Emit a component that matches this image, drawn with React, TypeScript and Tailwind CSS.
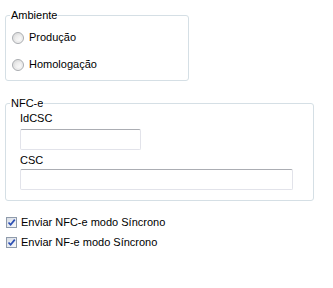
import type { ReactNode } from 'react'

const font = "font-['Liberation_Sans',Arial,sans-serif]"

function Radio({ label }: { label: string }) {
  return (
    <div className="flex h-[27px] items-center gap-[5px] pl-[6px]">
      <span className="flex h-[12px] w-[12px] items-center justify-center rounded-full border border-[#a9acb0] bg-gradient-to-br from-[#dcdcdc] to-[#f6f6f6]">
        <span className="h-[6px] w-[6px] rounded-full bg-gradient-to-br from-[#e6e6e6] to-[#fdfdfd]" />
      </span>
      <span className="text-[11px] leading-[13px] text-black">{label}</span>
    </div>
  )
}

function Check({ label }: { label: string }) {
  return (
    <div className="flex h-[20px] items-center gap-[4px] pl-[1px]">
      <span className="flex h-[11px] w-[11px] items-center justify-center border border-[#8f9bab] bg-gradient-to-br from-[#d9dee6] to-[#f7f8fa]">
        <svg viewBox="0 0 9 9" className="h-[9px] w-[9px]">
          <path d="M1.5 4.5 L3.6 6.8 L7.8 1.6" fill="none" stroke="#2c4fb4" strokeWidth="1.7" />
        </svg>
      </span>
      <span className="text-[11px] leading-[13px] text-black">{label}</span>
    </div>
  )
}

function Group({ title, className, children }: { title: string; className: string; children: ReactNode }) {
  return (
    <fieldset className={`rounded-[3px] border border-[#d5dfe5] ${className}`}>
      <legend className="ml-[4px] px-[1px] text-[11px] leading-[13px] text-black">{title}</legend>
      {children}
    </fieldset>
  )
}

function Field({ width }: { width: string }) {
  return (
    <div
      className={`h-[21px] rounded-[2px] border border-[#e2e3ea] border-t-[#abadb3] bg-white ${width}`}
    />
  )
}

export default function App() {
  return (
    <div className={`h-[288px] w-[333px] overflow-hidden bg-white ${font}`}>
      <div className="flex flex-col pl-[5px] pt-[9px]">
        <Group title="Ambiente" className="h-[72px] w-[184px]">
          <div className="flex flex-col pt-[2px]">
            <Radio label="Produção" />
            <Radio label="Homologação" />
          </div>
        </Group>

        <Group title="NFC-e" className="mt-[16px] h-[104px] w-[309px]">
          <div className="flex flex-col pl-[14px] pt-[2px]">
            <span className="text-[11px] leading-[13px] text-black">IdCSC</span>
            <div className="mt-[4px]">
              <Field width="w-[121px]" />
            </div>
            <span className="mt-[4px] text-[11px] leading-[13px] text-black">CSC</span>
            <div className="mt-[2px]">
              <Field width="w-[273px]" />
            </div>
          </div>
        </Group>

        <div className="mt-[11px] flex flex-col">
          <Check label="Enviar NFC-e modo Síncrono" />
          <Check label="Enviar NF-e modo Síncrono" />
        </div>
      </div>
    </div>
  )
}
